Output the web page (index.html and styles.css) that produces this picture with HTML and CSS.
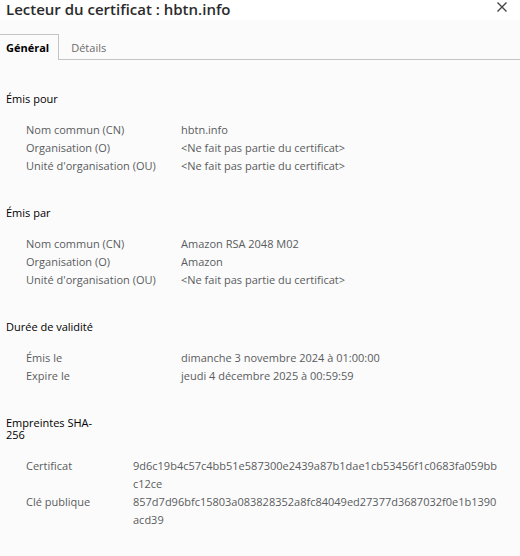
FILE: index.html
```html
<!DOCTYPE html>
<html lang="fr">
<head>
<meta charset="utf-8">
<title>Lecteur du certificat : hbtn.info</title>
<link rel="stylesheet" href="styles.css">
</head>
<body>
<header class="titlebar">
  <h1 class="title">Lecteur du certificat : hbtn.info</h1>
  <button class="close" type="button" aria-label="Fermer">
    <svg class="close-icon" viewBox="0 0 10 10" aria-hidden="true"><path d="M.5.5l9 9M9.5.5l-9 9"/></svg>
  </button>
</header>
<div class="tabs" role="tablist">
  <button class="tab tab-active" type="button" role="tab" aria-selected="true">Général</button>
  <button class="tab" type="button" role="tab" aria-selected="false">Détails</button>
</div>
<main class="panel">
  <section class="group">
    <h2 class="heading">Émis pour</h2>
    <dl class="fields">
      <dt>Nom commun (CN)</dt><dd>hbtn.info</dd>
      <dt>Organisation (O)</dt><dd>&lt;Ne fait pas partie du certificat&gt;</dd>
      <dt>Unité d'organisation (OU)</dt><dd>&lt;Ne fait pas partie du certificat&gt;</dd>
    </dl>
  </section>
  <section class="group">
    <h2 class="heading">Émis par</h2>
    <dl class="fields">
      <dt>Nom commun (CN)</dt><dd>Amazon RSA 2048 M02</dd>
      <dt>Organisation (O)</dt><dd>Amazon</dd>
      <dt>Unité d'organisation (OU)</dt><dd>&lt;Ne fait pas partie du certificat&gt;</dd>
    </dl>
  </section>
  <section class="group">
    <h2 class="heading">Durée de validité</h2>
    <dl class="fields">
      <dt>Émis le</dt><dd>dimanche 3 novembre 2024 à 01:00:00</dd>
      <dt>Expire le</dt><dd>jeudi 4 décembre 2025 à 00:59:59</dd>
    </dl>
  </section>
  <section class="group">
    <h2 class="heading">Empreintes SHA-256</h2>
    <dl class="fields fields-hash">
      <dt>Certificat</dt><dd>9d6c19b4c57c4bb51e587300e2439a87b1dae1cb53456f1c0683fa059bbc12ce</dd>
      <dt>Clé publique</dt><dd>857d7d96bfc15803a083828352a8fc84049ed27377d3687032f0e1b1390acd39</dd>
    </dl>
  </section>
</main>
</body>
</html>
```
FILE: styles.css
```css
* {
  box-sizing: border-box;
}

body {
  margin: 0;
  background: #fbfbfb;
  color: #5a5b5e;
  font: 11px/18px "Open Sans", "Noto Sans", sans-serif;
}

.titlebar {
  display: flex;
  align-items: center;
  justify-content: space-between;
  height: 20px;
  padding: 0 13px 2px 6px;
  background: #fff;
}

.title {
  margin: 0;
  color: #2b2b2b;
  font-size: 15px;
  font-weight: 600;
  line-height: 18px;
}

.close {
  display: flex;
  padding: 0;
  border: 0;
  background: none;
}

.close-icon {
  width: 10px;
  height: 10px;
  margin-bottom: 4px;
  fill: none;
  stroke: #444;
  stroke-width: 1.4;
}

.tabs {
  display: flex;
  height: 40px;
  padding-top: 14px;
  border-bottom: 1px solid #c4c4c4;
}

.tab {
  height: 26px;
  padding: 0 12px;
  border: solid transparent;
  border-width: 1px 1px 0 0;
  background: none;
  color: #6b6b6b;
  font: inherit;
}

.tab-active {
  padding: 0 9px 0 6px;
  border-color: #c4c4c4;
  background: #fbfbfb;
  color: #000;
  font-weight: 700;
}

.panel {
  display: flex;
  flex-direction: column;
  gap: 32px;
  padding: 33px 10px 32px 6px;
}

.heading {
  max-width: 100px;
  margin: 0 0 16px;
  color: #000;
  font-size: 11px;
  font-weight: 400;
  line-height: 12px;
}

.fields {
  display: grid;
  grid-template-columns: 155px 1fr;
  margin: 0 0 0 20px;
}

.fields-hash {
  grid-template-columns: 107px 1fr;
  padding-right: 12px;
}

.fields dd {
  margin: 0;
  word-break: break-all;
}
```
